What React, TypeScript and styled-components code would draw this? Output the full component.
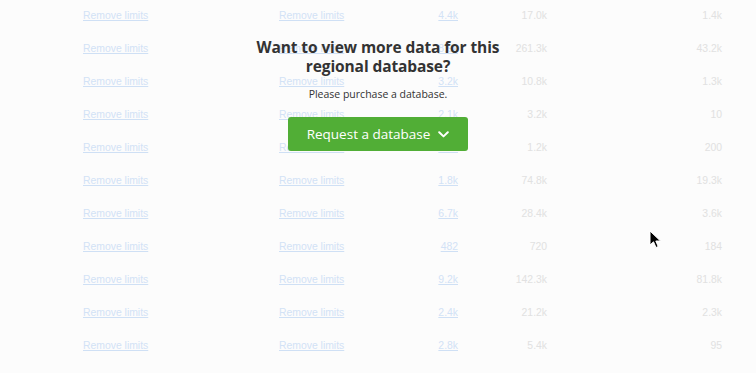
import React from "react";
import styled, { createGlobalStyle } from "styled-components";

const Global = createGlobalStyle`
  html, body { margin: 0; padding: 0; background: #fcfcfc; }
  body { width: 756px; height: 373px; overflow: hidden; }
`;

const Page = styled.div`
  position: relative;
  width: 756px;
  height: 373px;
  overflow: hidden;
  background: #fcfcfc;
  font-family: "Liberation Sans", Arial, sans-serif;
`;

const Table = styled.div`
  display: grid;
  grid-template-columns: 196px 120px 59px 89px 175px;
  grid-auto-rows: 33px;
  padding-left: 83px;
  margin-top: -1px;
  font-size: 10.4px;
  line-height: 13px;
`;

const Cell = styled.div<{ $align?: "left" | "right" }>`
  display: flex;
  align-items: center;
  justify-content: ${(p) => (p.$align === "right" ? "flex-end" : "flex-start")};
  white-space: nowrap;
`;

const Link = styled.a`
  color: #d2e2f6;
  text-decoration: underline;
  text-decoration-color: #cfe0f5;
  text-underline-offset: 1px;
`;

const Num = styled.span`
  color: #e1e1e1;
`;

const Overlay = styled.div`
  position: absolute;
  left: 0;
  right: 0;
  top: 38px;
  display: flex;
  flex-direction: column;
  align-items: center;
  text-align: center;
`;

const Heading = styled.h2`
  margin: 0;
  width: 260px;
  font-family: "Open Sans", "Noto Sans", sans-serif;
  font-weight: 700;
  font-size: 15.5px;
  line-height: 19px;
  color: #333333;
  letter-spacing: -0.1px;
`;

const Sub = styled.p`
  margin: 11px 0 0;
  font-family: "Open Sans", "Noto Sans", sans-serif;
  font-size: 10.5px;
  line-height: 14px;
  color: #333333;
`;

const Button = styled.button`
  margin-top: 16px;
  width: 180px;
  height: 34px;
  border: none;
  border-radius: 3px;
  background: #51ae36;
  color: #ffffff;
  font-family: "Open Sans", "Noto Sans", sans-serif;
  font-weight: 500;
  font-size: 13.5px;
  display: flex;
  align-items: center;
  justify-content: center;
  gap: 8px;
  padding: 0;
  cursor: pointer;
`;

const Cursor = styled.svg`
  position: absolute;
  left: 649px;
  top: 230px;
`;

const rows: [string, string, string][] = [
  ["4.4k", "17.0k", "1.4k"],
  ["8.9k", "261.3k", "43.2k"],
  ["3.2k", "10.8k", "1.3k"],
  ["2.1k", "3.2k", "10"],
  ["1.1k", "1.2k", "200"],
  ["1.8k", "74.8k", "19.3k"],
  ["6.7k", "28.4k", "3.6k"],
  ["482", "720", "184"],
  ["9.2k", "142.3k", "81.8k"],
  ["2.4k", "21.2k", "2.3k"],
  ["2.8k", "5.4k", "95"],
];

export default function App() {
  return (
    <Page>
      <Global />
      <Table>
        {rows.map(([a, b, c], i) => (
          <React.Fragment key={i}>
            <Cell><Link>Remove limits</Link></Cell>
            <Cell><Link>Remove limits</Link></Cell>
            <Cell $align="right"><Link>{a}</Link></Cell>
            <Cell $align="right"><Num>{b}</Num></Cell>
            <Cell $align="right"><Num>{c}</Num></Cell>
          </React.Fragment>
        ))}
      </Table>
      <Overlay>
        <Heading>Want to view more data for this regional database?</Heading>
        <Sub>Please purchase a database.</Sub>
        <Button>
          Request a database
          <svg width="11" height="7" viewBox="0 0 11 7" fill="none">
            <path d="M1.2 1.2 L5.5 5.4 L9.8 1.2" stroke="#fff" strokeWidth="2" strokeLinecap="round" strokeLinejoin="round" />
          </svg>
        </Button>
      </Overlay>
      <Cursor width="13" height="19" viewBox="0 0 13 19">
        <path d="M1 1 L1 15 L4.5 11.8 L7 17.5 L9.2 16.5 L6.8 11 L11.5 11 Z" fill="#000" stroke="#fff" strokeWidth="1" />
      </Cursor>
    </Page>
  );
}
